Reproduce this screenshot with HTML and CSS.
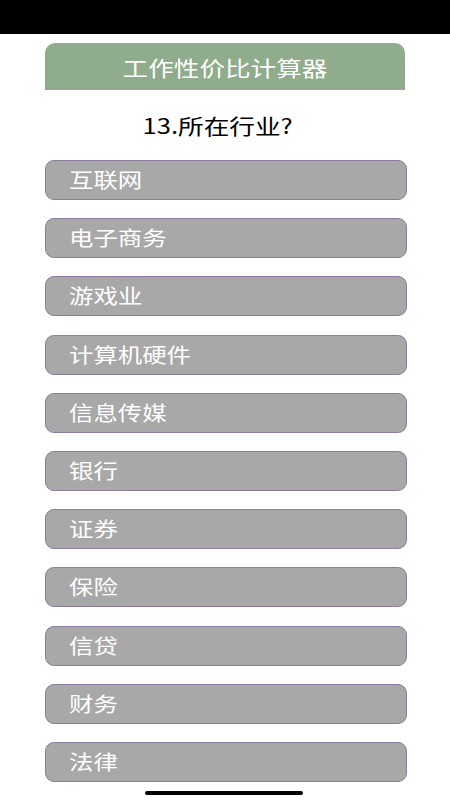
FILE: index.html
```html
<!DOCTYPE html>
<html lang="zh-CN">
<head>
<meta charset="utf-8">
<title>工作性价比计算器</title>
<link rel="stylesheet" href="styles.css">
</head>
<body>
<div class="status-bar"></div>
<main class="page">
  <header class="title-bar"><span class="wide">工作性价比计算器</span></header>
  <h2 class="question"><span class="wide">13.所在行业?</span></h2>
  <ul class="options">
    <li class="option"><span class="wide">互联网</span></li>
    <li class="option"><span class="wide">电子商务</span></li>
    <li class="option"><span class="wide">游戏业</span></li>
    <li class="option"><span class="wide">计算机硬件</span></li>
    <li class="option"><span class="wide">信息传媒</span></li>
    <li class="option"><span class="wide">银行</span></li>
    <li class="option"><span class="wide">证券</span></li>
    <li class="option"><span class="wide">保险</span></li>
    <li class="option"><span class="wide">信贷</span></li>
    <li class="option"><span class="wide">财务</span></li>
    <li class="option"><span class="wide">法律</span></li>
  </ul>
</main>
<div class="home-indicator"></div>
</body>
</html>
```
FILE: styles.css
```css
html, body {
  margin: 0;
  padding: 0;
  background: #ffffff;
}
body {
  width: 450px;
  height: 800px;
  overflow: hidden;
  position: relative;
  font-family: "Noto Sans CJK SC", "Noto Sans", sans-serif;
}
.status-bar {
  height: 34px;
  background: #000000;
}
.page {
  display: flex;
  flex-direction: column;
  padding: 9px 0 0 45px;
}
.wide {
  display: inline-block;
  transform: scaleX(1.22);
}
.title-bar {
  width: 360px;
  height: 47px;
  box-sizing: border-box;
  background: #8fac8c;
  border-radius: 10px 10px 0 0;
  display: flex;
  align-items: center;
  justify-content: center;
  color: #ffffff;
  font-size: 21px;
  line-height: 1;
  padding-top: 1px;
}
.title-bar .wide {
  transform-origin: center center;
}
.question {
  width: 360px;
  height: 70px;
  box-sizing: border-box;
  padding-right: 14px;
  margin: 0;
  display: flex;
  align-items: center;
  justify-content: center;
  font-size: 21px;
  font-weight: normal;
  color: #000000;
  line-height: 1;
}
.question .wide {
  transform-origin: center center;
}
.options {
  list-style: none;
  margin: 0;
  padding: 0;
  display: flex;
  flex-direction: column;
  gap: 18.2px;
}
.option {
  width: 362px;
  height: 40px;
  box-sizing: border-box;
  background: #a8a8a8;
  border: 1.5px solid #8c7d9e;
  border-radius: 9px;
  display: flex;
  align-items: center;
  padding-left: 23px;
  color: #ffffff;
  font-size: 20px;
  line-height: 1;
}
.option .wide {
  transform-origin: left center;
}
.home-indicator {
  position: absolute;
  left: 145px;
  top: 791px;
  width: 158px;
  height: 4px;
  border-radius: 2px;
  background: #000000;
}
```
